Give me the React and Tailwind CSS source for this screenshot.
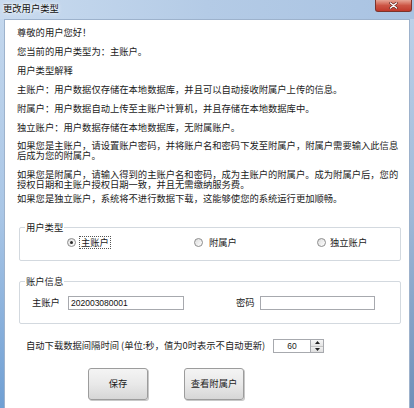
import React from "react";

function Radio({ checked }) {
  return (
    <span className="relative w-[9px] h-[9px] rounded-full border border-[#8c8c8c] bg-gradient-to-br from-[#dcdcdc] to-[#ffffff] flex items-center justify-center shrink-0">
      {checked && <span className="w-[3px] h-[3px] rounded-full bg-[#2a2a2a]" />}
    </span>
  );
}

function Group({ label, h, mt, children }) {
  return (
    <div className={`relative ml-[14px] w-[382px] ${h} ${mt} border border-[#d3d9df] rounded-[2px]`}>
      <span className="absolute left-[5px] top-[-6px] bg-white px-[1px] leading-[11px] whitespace-nowrap">{label}</span>
      {children}
    </div>
  );
}

export default function App() {
  const line = "h-[19px] leading-[19px] whitespace-nowrap";
  return (
    <div className="w-[414px] h-[408px] overflow-hidden flex flex-col bg-[#b9d0ea] font-['Noto_Sans_CJK_SC',sans-serif] text-[9.3px] text-[#1b1b1b]">
      {/* Title bar */}
      <div className="h-[19px] shrink-0 flex items-start justify-between bg-gradient-to-r from-[#c9dbef] via-[#b4cbe6] to-[#a9c3e2]">
        <span className="pl-[3px] pt-[2px] leading-[12px] text-[#111] [text-shadow:0_0_3px_#fff,0_0_5px_#fff]">更改用户类型</span>
        <div className="mr-[2px] w-[37px] h-[12px] rounded-b-[3px] border border-t-0 border-[#7c332b] bg-gradient-to-b from-[#e6a596] via-[#cc5545] to-[#c0392b] flex items-center justify-center">
          <svg width="9" height="7" viewBox="0 0 9 7">
            <path d="M1.5 1 L7.5 6 M7.5 1 L1.5 6" stroke="#5a1d17" strokeWidth="2.6" strokeLinecap="round" />
            <path d="M1.5 1 L7.5 6 M7.5 1 L1.5 6" stroke="#ffffff" strokeWidth="1.5" strokeLinecap="round" />
          </svg>
        </div>
      </div>
      <div className="flex flex-1 min-h-0">
        <div className="w-[4px] shrink-0 bg-gradient-to-b from-[#c3d7ed] via-[#a9c6e6] to-[#6f9fd3]" />
        <div className="flex-1 min-w-0 bg-white border-t border-l border-r border-[#9db2cc] flex flex-col">
          <div className="pl-[12px] pt-[3px]">
            <div className={line}>尊敬的用户您好！</div>
            <div className={line}>您当前的用户类型为：主账户。</div>
            <div className={line}>用户类型解释</div>
            <div className={line}>主账户：用户数据仅存储在本地数据库，并且可以自动接收附属户上传的信息。</div>
            <div className={line}>附属户：用户数据自动上传至主账户计算机，并且存储在本地数据库中。</div>
            <div className={line}>独立账户：用户数据存储在本地数据库，无附属账户。</div>
            <div className="mt-[3px] leading-[10px] whitespace-nowrap">
              <div>如果您是主账户，请设置账户密码，并将账户名和密码下发至附属户，附属户需要输入此信息</div>
              <div>后成为您的附属户。</div>
            </div>
            <div className="mt-[9px] leading-[10px] whitespace-nowrap">
              <div>如果您是附属户，请输入得到的主账户名和密码，成为主账户的附属户。成为附属户后，您的</div>
              <div>授权日期和主账户授权日期一致，并且无需缴纳服务费。</div>
            </div>
            <div className={line}>如果您是独立账户，系统将不进行数据下载，这能够使您的系统运行更加顺畅。</div>
          </div>

          <Group label="用户类型" h="h-[34px]" mt="mt-[19px]">
            <div className="mt-[8px] h-[12px] pl-[47px] flex items-center">
              <div className="w-[127px] flex items-center">
                <Radio checked />
                <span className="ml-[3px] px-[1px] leading-[11px] border border-dotted border-[#555]">主账户</span>
              </div>
              <div className="w-[123px] flex items-center">
                <Radio />
                <span className="ml-[6px] leading-[11px]">附属户</span>
              </div>
              <div className="flex items-center">
                <Radio />
                <span className="ml-[4px] leading-[11px]">独立账户</span>
              </div>
            </div>
          </Group>

          <Group label="账户信息" h="h-[43px]" mt="mt-[20px]">
            <div className="mt-[14px] pl-[12px] flex items-center h-[14px]">
              <span className="w-[36px] whitespace-nowrap">主账户</span>
              <div className="w-[116px] h-[14px] border border-[#a7a9ae] bg-white flex items-center pl-[2px] font-['Liberation_Sans',sans-serif] text-[8.5px] text-[#111]">202003080001</div>
              <span className="ml-[52px] w-[24px] whitespace-nowrap">密码</span>
              <div className="w-[115px] h-[14px] border border-[#a7a9ae] bg-white" />
            </div>
          </Group>

          <div className="mt-[15px] ml-[21px] h-[14px] flex items-center">
            <span className="w-[247px] whitespace-nowrap">自动下载数据间隔时间 (单位:秒，值为0时表示不自动更新)</span>
            <div className="w-[38px] h-[14px] border border-[#a7a9ae] bg-white flex items-center justify-center font-['Liberation_Sans',sans-serif] text-[8.5px]">60</div>
            <div className="w-[13px] h-[14px] border border-l-0 border-[#a7a9ae] flex flex-col">
              <div className="flex-1 flex items-center justify-center bg-gradient-to-b from-[#f6f6f6] to-[#e4e4e4] border-b border-[#c4c4c4]">
                <svg width="5" height="3" viewBox="0 0 5 3"><path d="M0 3 L2.5 0 L5 3 Z" fill="#222" /></svg>
              </div>
              <div className="flex-1 flex items-center justify-center bg-gradient-to-b from-[#f0f0f0] to-[#dedede]">
                <svg width="5" height="3" viewBox="0 0 5 3"><path d="M0 0 L2.5 3 L5 0 Z" fill="#222" /></svg>
              </div>
            </div>
          </div>

          <div className="mt-[15px] ml-[83px] flex gap-[36px]">
            <button className="w-[60px] h-[32px] rounded-[3px] border border-[#9c9c9c] bg-gradient-to-b from-[#f4f4f4] via-[#e9e9e9] to-[#d6d6d6] shadow-[1px_1px_0_#c8c8c8] text-[9.3px] text-[#1b1b1b]">保存</button>
            <button className="w-[60px] h-[32px] rounded-[3px] border border-[#9c9c9c] bg-gradient-to-b from-[#f4f4f4] via-[#e9e9e9] to-[#d6d6d6] shadow-[1px_1px_0_#c8c8c8] text-[9.3px] text-[#1b1b1b]">查看附属户</button>
          </div>
        </div>
        <div className="w-[4px] shrink-0 bg-gradient-to-b from-[#bcd1e9] via-[#9fb9d8] to-[#6e8fb8]" />
      </div>
    </div>
  );
}
